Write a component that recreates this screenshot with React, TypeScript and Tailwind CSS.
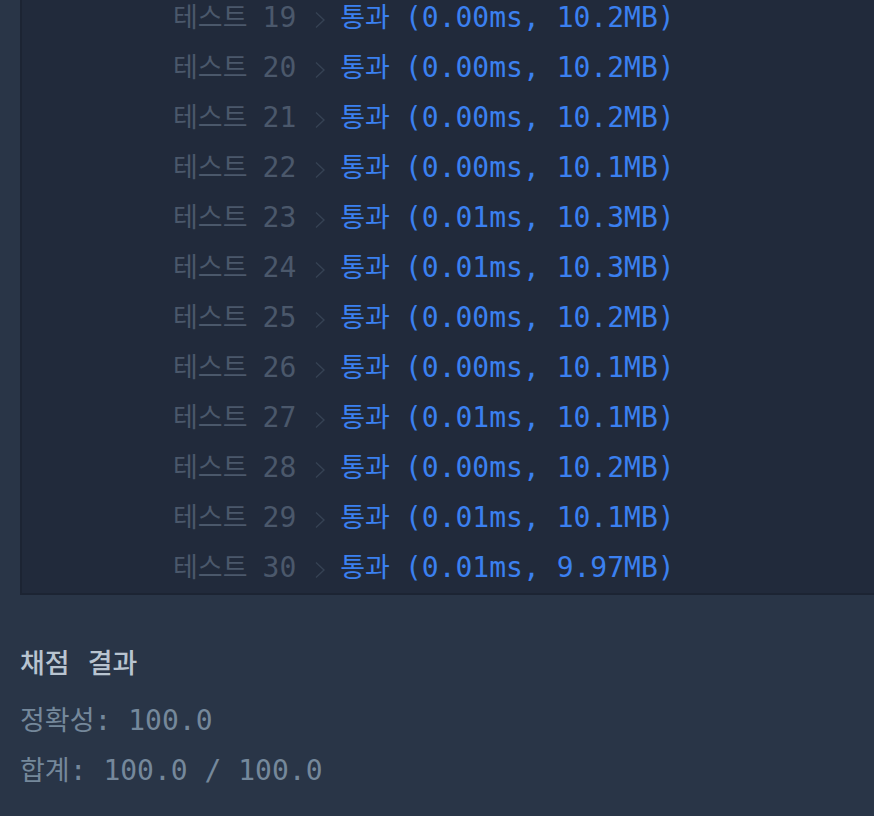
import React from "react";

const rows = [
  ["19", "0.00ms, 10.2MB"],
  ["20", "0.00ms, 10.2MB"],
  ["21", "0.00ms, 10.2MB"],
  ["22", "0.00ms, 10.1MB"],
  ["23", "0.01ms, 10.3MB"],
  ["24", "0.01ms, 10.3MB"],
  ["25", "0.00ms, 10.2MB"],
  ["26", "0.00ms, 10.1MB"],
  ["27", "0.01ms, 10.1MB"],
  ["28", "0.00ms, 10.2MB"],
  ["29", "0.01ms, 10.1MB"],
  ["30", "0.01ms, 9.97MB"],
];

const mono = "font-['DejaVu_Sans_Mono','Noto_Sans_CJK_KR',monospace]";
const ko = "inline-block font-['Noto_Sans_CJK_KR',sans-serif] text-[27px] leading-none";

function Chevron() {
  return (
    <svg width="12" height="18" viewBox="0 0 12 18" className="inline-block ml-[18px] translate-y-[1px]">
      <path d="M2 1.5 L10 9 L2 16.5" fill="none" stroke="#364254" strokeWidth="1.4" />
    </svg>
  );
}

export default function App() {
  return (
    <div className={`w-[874px] h-[816px] overflow-hidden bg-[#293547] ${mono} text-[28px] leading-[50px] whitespace-pre`}>
      <div className="-mt-[7px] ml-[20px] w-[900px] bg-[#212a3b] border-l-2 border-b-2 border-[#1c2433]">
        {rows.map(([n, r]) => (
          <div key={n} className="h-[50px] pl-[151px]">
            <span className={`${ko} text-[#4b586b]`}>테스트</span>
            <span className="inline-block ml-[15px] text-[#4b586b]">{n}</span>
            <Chevron />
            <span className={`${ko} ml-[14px] text-[#3b80f0]`}>통과</span>
            <span className="inline-block ml-[15px] text-[#3b80f0]">({r})</span>
          </div>
        ))}
      </div>
      <div className="pl-[20px]">
        <div className="mt-[44px] h-[50px] text-[#b8c4d0]">
          <span className={`${ko} font-medium`}>채점</span>
          <span className={`${ko} font-medium ml-[18px]`}>결과</span>
        </div>
        <div className="mt-[7px] h-[50px] text-[#75889b]">
          <span className={ko}>정확성</span>
          <span>: 100.0</span>
        </div>
        <div className="h-[50px] text-[#75889b]">
          <span className={ko}>합계</span>
          <span>: 100.0 / 100.0</span>
        </div>
      </div>
    </div>
  );
}
